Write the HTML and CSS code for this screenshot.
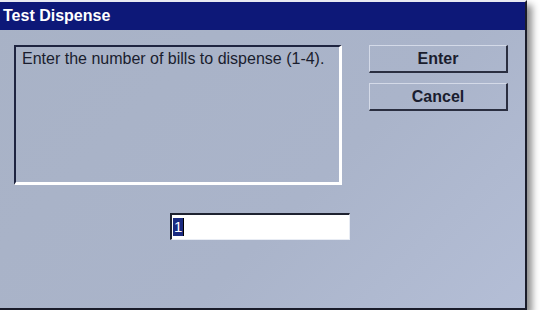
FILE: index.html
```html
<!DOCTYPE html>
<html>
<head>
    <title>Test Dispense</title>
    <link rel="stylesheet" href="styles.css">
</head>
<body>
    <div class="window">
        <div class="title-bar">Test Dispense</div>
        <div class="content">
            <div class="top-row">
                <div class="message">Enter the number of bills to dispense (1-4).</div>
                <div class="buttons">
                    <button class="btn">Enter</button>
                    <button class="btn">Cancel</button>
                </div>
            </div>
            <div class="input-row">
                <div class="count-box"><span class="sel">1</span><span class="caret"></span></div>
            </div>
        </div>
    </div>
</body>
</html>
```

FILE: styles.css
```css
body {
    margin: 0;
    background-color: #fff;
    font-family: "Liberation Sans", Arial, sans-serif;
}
.window {
    width: 525px;
    height: 306px;
    background: linear-gradient(135deg, #a8b2c6 0%, #aab4ca 60%, #b4bed6 100%);
    border-right: 2px solid #1a1c2a;
    border-bottom: 2px solid #1a1c2a;
    border-top: 2px solid #e8eaf2;
    box-shadow: 5px 5px 7px rgba(0, 0, 0, 0.45);
}
.title-bar {
    height: 28px;
    line-height: 28px;
    background-color: #0d1878;
    color: #fff;
    font-weight: bold;
    font-size: 16px;
    padding-left: 3px;
}
.content {
    padding: 15px 0 0 14px;
}
.top-row {
    display: flex;
    gap: 27px;
}
.message {
    width: 317px;
    height: 132px;
    border-top: 2px solid #1e2440;
    border-left: 2px solid #1e2440;
    border-right: 3px solid #fff;
    border-bottom: 3px solid #fff;
    padding: 3px 0 0 6px;
    font-size: 16px;
    color: #1a1d2e;
}
.buttons {
    display: flex;
    flex-direction: column;
    gap: 10px;
}
.btn {
    width: 139px;
    height: 28px;
    background-color: transparent;
    border-top: 1px solid #d4dae8;
    border-left: 1px solid #d4dae8;
    border-right: 2px solid #2a2e40;
    border-bottom: 2px solid #2a2e40;
    font-family: "Liberation Sans", Arial, sans-serif;
    font-weight: bold;
    font-size: 16px;
    color: #1a1d2e;
    padding: 0;
}
.input-row {
    padding: 28px 0 0 156px;
}
.count-box {
    width: 176px;
    height: 24px;
    background-color: #fff;
    border-top: 2px solid #1e2230;
    border-left: 2px solid #1e2230;
    border-right: 1px solid #e8ecf4;
    border-bottom: 1px solid #e8ecf4;
    display: flex;
    align-items: center;
    padding-left: 1px;
    font-size: 15px;
}
.sel {
    background-color: #1a2a80;
    color: #fff;
    line-height: 18px;
    padding: 0 1px;
}
.caret {
    width: 1px;
    height: 18px;
    background-color: #000;
}
```
